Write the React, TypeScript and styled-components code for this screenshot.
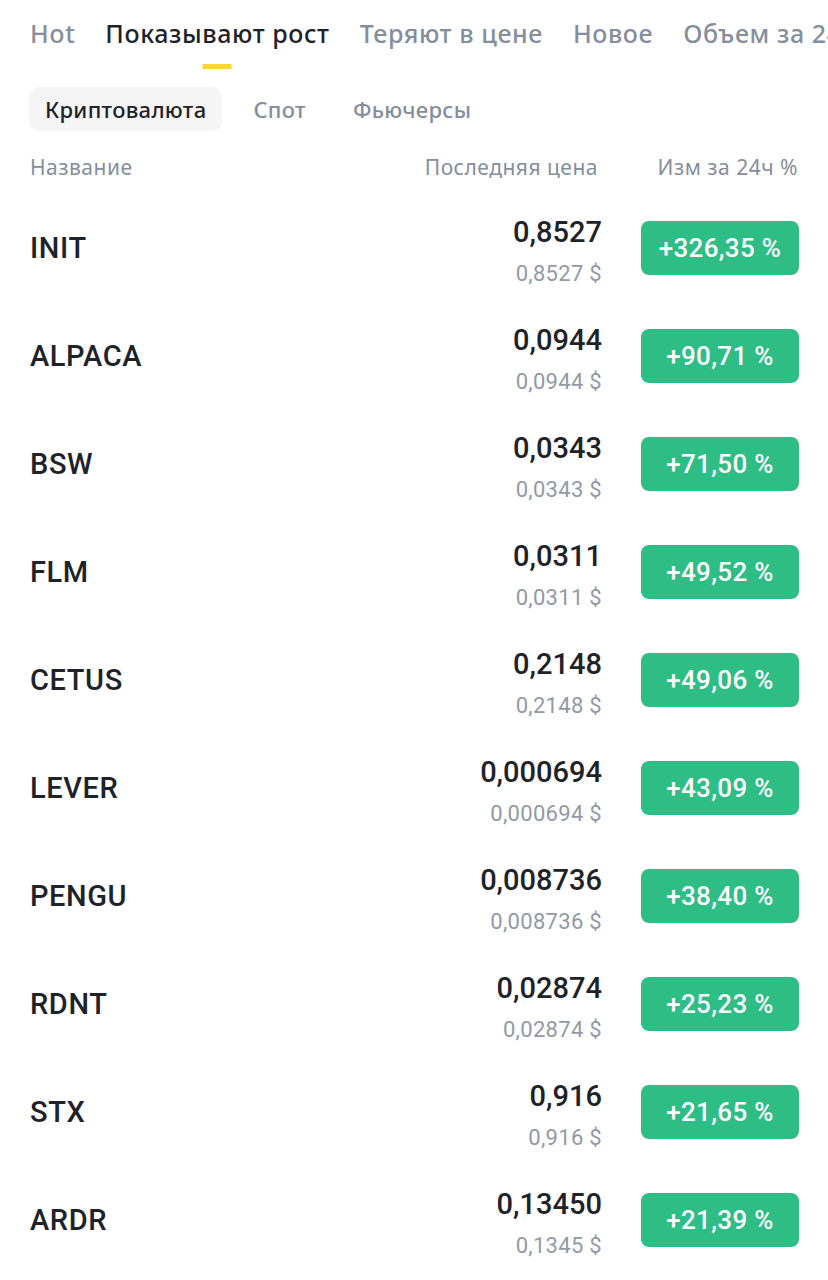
import React from "react";
import styled, { createGlobalStyle } from "styled-components";

const Global = createGlobalStyle`
  html, body { margin: 0; padding: 0; background: #ffffff; }
  body { font-family: Roboto, "Noto Sans", sans-serif; -webkit-font-smoothing: antialiased; }
`;

const Page = styled.div`
  width: 828px;
  height: 1280px;
  overflow: hidden;
  background: #fff;
  box-sizing: border-box;
`;

const TabBar = styled.div`
  display: flex;
  gap: 30px;
  padding: 16px 0 0 30px;
  white-space: nowrap;
  overflow: hidden;
  height: 74px;
  box-sizing: border-box;
`;

const Tab = styled.div<{ $active?: boolean }>`
  position: relative;
  font-family: "Noto Sans", Roboto, sans-serif;
  font-size: 25px;
  letter-spacing: 0.6px;
  line-height: 34px;
  font-weight: 500;
  color: ${(p) => (p.$active ? "#1e2329" : "#848e9c")};
  flex-shrink: 0;
  &::after {
    content: "";
    display: ${(p) => (p.$active ? "block" : "none")};
    position: absolute;
    left: 50%;
    transform: translateX(-50%);
    top: 48px;
    width: 29px;
    height: 5px;
    background: #fcd535;
  }
`;

const SubBar = styled.div`
  display: flex;
  align-items: center;
  padding: 13px 0 0 29px;
`;

const SubTab = styled.div<{ $active?: boolean }>`
  font-family: "Noto Sans", Roboto, sans-serif;
  font-size: 22px;
  letter-spacing: 0.3px;
  font-weight: 500;
  height: 44px;
  display: flex;
  align-items: center;
  padding: 0 16px;
  margin-right: 15px;
  border-radius: 10px;
  background: ${(p) => (p.$active ? "#f5f5f5" : "transparent")};
  color: ${(p) => (p.$active ? "#1e2329" : "#848e9c")};
`;

const HeaderRow = styled.div`
  display: grid;
  grid-template-columns: 1fr 230px 200px;
  padding: 22px 30px 0 30px;
  font-family: "Noto Sans", Roboto, sans-serif;
  font-size: 21px;
  letter-spacing: 0.5px;
  color: #848e9c;
  height: 28px;
  line-height: 28px;
  box-sizing: content-box;
`;

const HeadCell = styled.div<{ $align?: string }>`
  text-align: ${(p) => p.$align || "left"};
`;

const List = styled.div`
  display: flex;
  flex-direction: column;
  padding-top: 13px;
`;

const Row = styled.div`
  display: grid;
  grid-template-columns: 1fr 250px 197px;
  align-items: center;
  height: 108px;
  padding: 0 29px 0 30px;
`;

const Name = styled.div`
  font-family: Roboto, sans-serif;
  font-size: 29px;
  font-weight: 500;
  color: #1e2329;
  letter-spacing: 0.6px;
`;

const PriceCol = styled.div`
  display: flex;
  flex-direction: column;
  align-items: flex-end;
  padding-top: 6px;
`;

const Price = styled.div`
  font-family: Roboto, sans-serif;
  font-size: 29px;
  font-weight: 500;
  color: #1e2329;
  line-height: 36px;
`;

const SubPrice = styled.div`
  font-family: Roboto, sans-serif;
  font-size: 22px;
  letter-spacing: 0.3px;
  color: #929aa5;
  line-height: 28px;
  margin-top: 10px;
`;

const Badge = styled.div`
  justify-self: end;
  width: 158px;
  height: 54px;
  border-radius: 8px;
  background: #2ebd85;
  color: #fff;
  display: flex;
  align-items: center;
  justify-content: center;
  font-family: Roboto, sans-serif;
  font-size: 26px;
  letter-spacing: 0.3px;
  font-weight: 500;
`;

const rows = [
  ["INIT", "0,8527", "0,8527 $", "+326,35 %"],
  ["ALPACA", "0,0944", "0,0944 $", "+90,71 %"],
  ["BSW", "0,0343", "0,0343 $", "+71,50 %"],
  ["FLM", "0,0311", "0,0311 $", "+49,52 %"],
  ["CETUS", "0,2148", "0,2148 $", "+49,06 %"],
  ["LEVER", "0,000694", "0,000694 $", "+43,09 %"],
  ["PENGU", "0,008736", "0,008736 $", "+38,40 %"],
  ["RDNT", "0,02874", "0,02874 $", "+25,23 %"],
  ["STX", "0,916", "0,916 $", "+21,65 %"],
  ["ARDR", "0,13450", "0,1345 $", "+21,39 %"],
];

export default function App() {
  return (
    <Page>
      <Global />
      <TabBar>
        <Tab>Hot</Tab>
        <Tab $active>Показывают рост</Tab>
        <Tab>Теряют в цене</Tab>
        <Tab>Новое</Tab>
        <Tab>Объем за 24ч</Tab>
      </TabBar>
      <SubBar>
        <SubTab $active>Криптовалюта</SubTab>
        <SubTab>Спот</SubTab>
        <SubTab>Фьючерсы</SubTab>
      </SubBar>
      <HeaderRow>
        <HeadCell>Название</HeadCell>
        <HeadCell $align="right">Последняя цена</HeadCell>
        <HeadCell $align="right">Изм за 24ч %</HeadCell>
      </HeaderRow>
      <List>
        {rows.map(([n, p, s, c]) => (
          <Row key={n}>
            <Name>{n}</Name>
            <PriceCol>
              <Price>{p}</Price>
              <SubPrice>{s}</SubPrice>
            </PriceCol>
            <Badge>{c}</Badge>
          </Row>
        ))}
      </List>
    </Page>
  );
}
